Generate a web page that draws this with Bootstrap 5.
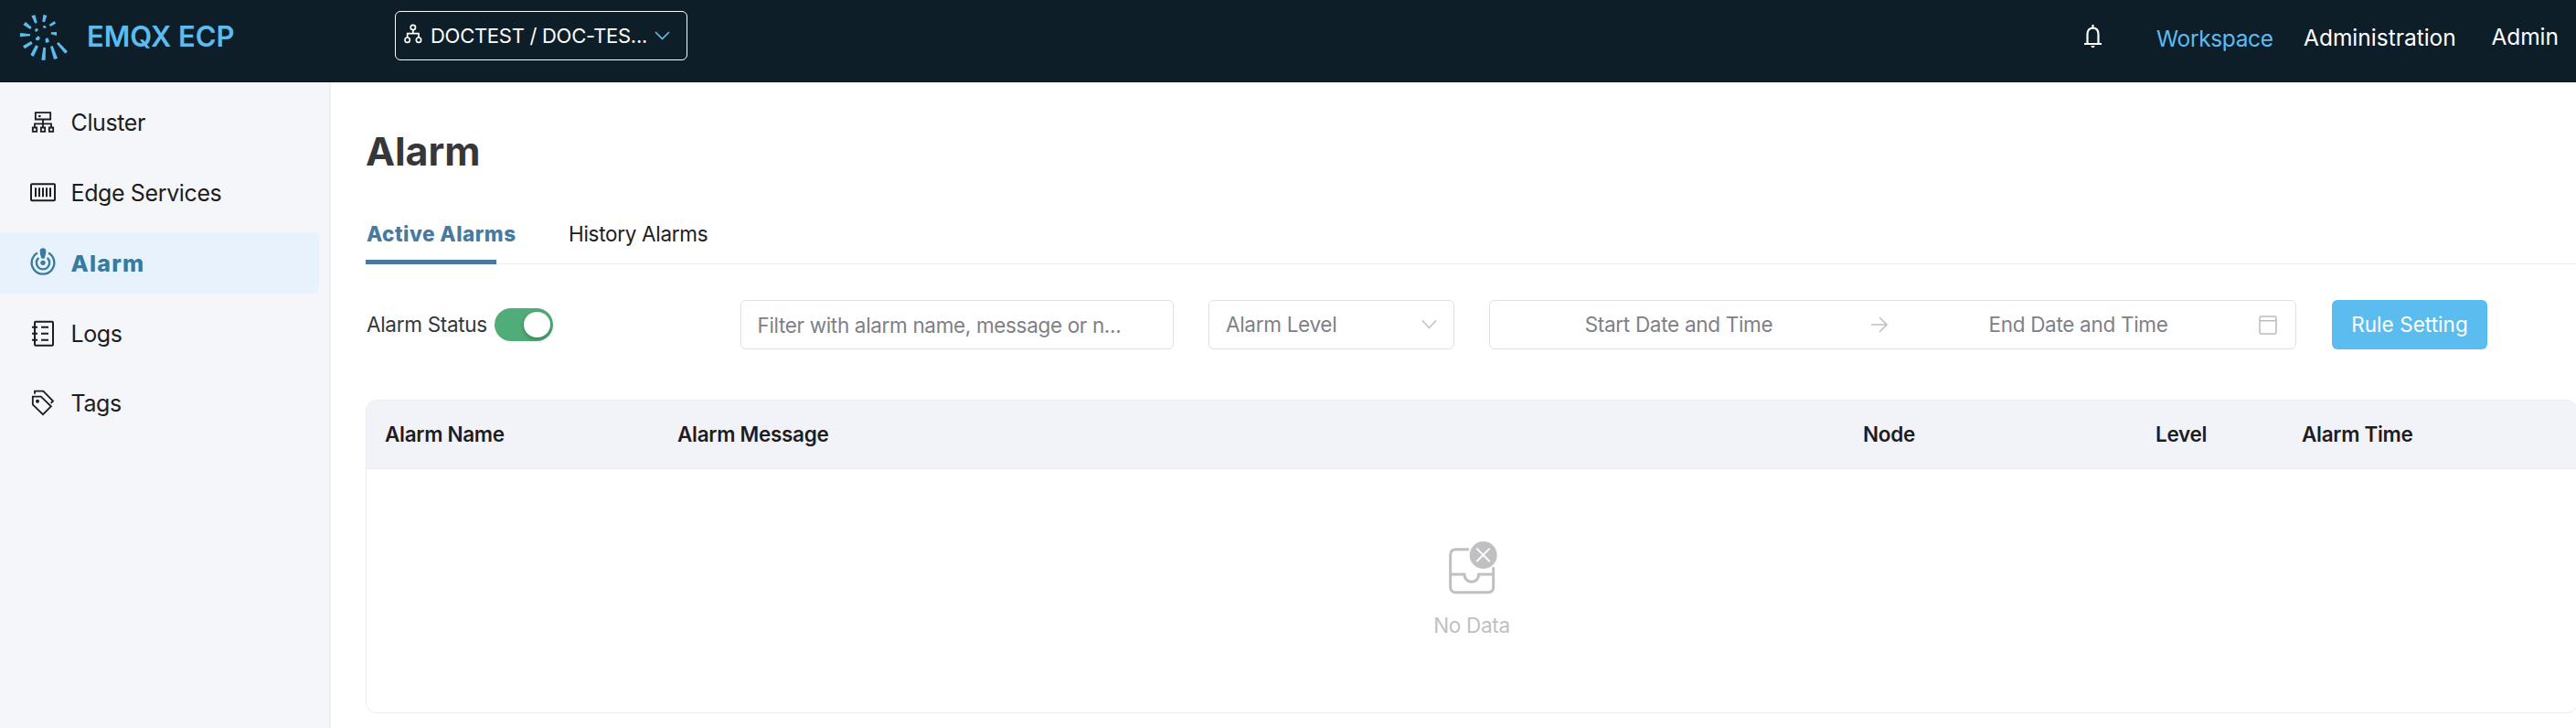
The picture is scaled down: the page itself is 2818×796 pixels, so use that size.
<!DOCTYPE html>
<html lang="en">
<head>
<meta charset="utf-8">
<title>Alarm - EMQX ECP</title>
<meta name="viewport" content="width=device-width, initial-scale=1">
<link href="https://cdn.jsdelivr.net/npm/bootstrap@5.3.0/dist/css/bootstrap.min.css" rel="stylesheet">
<style>
body{font-family:Inter,"Liberation Sans",sans-serif;font-size:22.5px;line-height:30px;letter-spacing:-.3px;color:#1d1d1f;background:#fff;overflow:hidden;white-space:nowrap}
svg{display:block;flex:none;overflow:visible}
a{text-decoration:none}
/* header */
.topbar{height:90px;padding:0 0 11px 22px;background:#0d1e29;border-bottom:1px solid #0b1024;color:#fff}
.brand-link{width:410px;padding-top:2px;font-size:31px;font-weight:600;letter-spacing:0;color:#5bbcef}
.brand-link svg{margin:2px 21px 0 0}
.ws-picker{width:320px;height:54px;padding:0 18px 0 9px;border:1px solid #fff;border-radius:6px;background:none;color:#fff;font-size:22px;letter-spacing:-.28px}
.ws-picker svg:first-child{margin:-4px 9px 0 0}
.top-bell{margin-right:60.5px}
.top-link{color:#fff;font-size:24.5px;letter-spacing:0}
.top-link.active{width:161px;padding-top:5px;color:#5bbcef;letter-spacing:-.35px}
.top-admin{width:205.5px;padding-top:4px}
.top-user{width:92.5px;padding-top:2px;letter-spacing:-.1px}
/* sidebar */
.side{width:362px;height:706px;padding-top:10.8px;background:#f5f6fa;border-right:2px solid #eeeff5}
.side-link{height:67px;width:349px;margin-bottom:9.8px;padding-left:32px;color:#1d1d1f;font-size:25px;letter-spacing:-.38px;border-radius:0 5px 5px 0}
.side-link.active{background:#e8f2fc;color:#377ba1;font-weight:800;letter-spacing:1.2px}
.side-link svg{margin-right:15.5px}
/* content */
.content{padding-left:38px}
.page-title{margin:50px 0 34px;font-size:43px;line-height:50px;font-weight:700;letter-spacing:-.1px;color:#36373b}
.alarm-tabs{height:65px;line-height:64px;border-bottom:1px solid #ececf0}
.alarm-tabs a{color:#1d1d1f}
.alarm-tabs .active{position:relative;width:222px;padding-left:1px;color:#467aa1;font-weight:800;letter-spacing:.5px}
.alarm-tabs .active::after{content:"";position:absolute;left:0;bottom:-1px;width:143px;height:5px;background:#467aa1}
.filters{height:54px;margin:39px 0 55px}
.status{width:410px;color:#36373b}
.status-label{width:141px;padding-left:1px}
.toggle-on{width:64px;height:36px;padding:4px 3px;border-radius:18px;background:#51ad78}
.toggle-on i{width:29px;height:28px;border-radius:50%;background:#fff;box-shadow:0 2px 5px rgba(0,35,11,.35)}
.field{height:54px;border:1px solid #dfdfe8;border-radius:6px;background:#fff;color:#808086}
.form-control.field{width:474px;margin-right:38px;padding:0 17.5px;font-size:22.5px;letter-spacing:-.34px}
.form-control.field::placeholder{color:#808086;opacity:1}
.level{width:269px;margin-right:38px;padding:0 18px}
.period{width:883px;margin-right:39px;padding:0 20px 0 0}
.period-start{width:416px;padding-right:3px}
.period-end{width:404px;padding-left:11px}
.rule-btn{width:170px;height:54px;padding:0;border:0;border-radius:6px;background:#5bbcef;color:#fff;font-size:22.5px;letter-spacing:.05px}
.alarm-card{width:2420px;height:343px;border:1px solid #ececf1;border-radius:12px;overflow:hidden}
.alarm-card table{table-layout:fixed;width:100%;margin:0;border-collapse:separate;border-spacing:0}
.alarm-card th{height:75px;padding:0 0 0 20px;vertical-align:middle;font-weight:600;color:#1d1d1f;background:#f2f3f9;border-bottom:1px solid #eaebf0}
.empty{padding-top:79px;color:#c0c0c2}
.empty svg{margin-left:3px}
.empty span{margin-top:19px}
</style>
</head>
<body>
<header class="topbar d-flex align-items-center">
  <a class="brand-link d-flex align-items-center" href="#">
    <svg width="52" height="50" viewBox="66 48 156 150" fill="#5bbcef"><path d="M142 48l12 3-7 22-8-2zM103 52l12-3 7 25-7 3zM76 81l8-9 20 17-5 7zM66 108v13l33-3v-6zM75 151l6 9 26-17-5-8zM100 180l10 6 16-34-9-4zM136 197h13l1-41-8-1zM177 195l12-4-16-41-8 3zM214 176l8-7-30-31-6 5zM186 105v12l-19-5 1-6zM179 69l4 8-17 10-5-6zM141 86l4-3 7 5-3 5-7-2zM114 98l6-6 6 5-5 7-6-1zM117 125l8-7 7 6-5 9-9-1zM149 127l8-3 5 13-10 4-3-4z"/></svg>
    <span>EMQX ECP</span>
  </a>
  <button class="ws-picker d-flex align-items-center" type="button">
    <svg width="20" height="20" viewBox="525 80 60 60" fill="none" stroke="#fff" stroke-width="5"><circle cx="554.500" cy="89" r="8"/><circle cx="536" cy="130" r="8"/><circle cx="573" cy="130" r="8"/><path d="M554.500 97v12M536 122v-13h37v13"/></svg>
    <span>DOCTEST / DOC-TES...</span>
    <svg class="ms-auto" width="17" height="10" viewBox="0 0 17 10" fill="none" stroke="#5bbcef" stroke-width="1.700"><path d="M1 1l7.500 7.500L16 1"/></svg>
  </button>
  <nav class="ms-auto d-flex align-items-center">
    <svg class="top-bell" width="19" height="25" viewBox="0 0 19 25" fill="none" stroke="#fff" stroke-width="2.200"><path d="M0 21h19M3.500 21V10.500C3.500 6 6 3.600 9.500 3.600S15.500 6 15.500 10.500V21M9.500 0v4"/><path d="M7.300 23h4.400l-1 2H8.300z" fill="#fff" stroke="none"/></svg>
    <a class="top-link active" href="#">Workspace</a>
    <a class="top-link top-admin" href="#">Administration</a>
    <a class="top-link top-user" href="#">Admin</a>
  </nav>
</header>
<div class="d-flex">
  <aside class="side flex-shrink-0">
    <a class="side-link d-flex align-items-center" href="#">
      <svg width="30" height="30" viewBox="96 358 90 90" fill="none" stroke="#1d1d1f" stroke-width="5.500"><path d="M116.500 370.500h49v22h-49zM141 393v26M114 419v-12h54v12M107.500 419.500h13v13h-13zM134.500 419.500h13v13h-13zM161.500 419.500h13v13h-13z"/><circle cx="130" cy="382" r="4" fill="#1d1d1f" stroke="none"/></svg>
      <span>Cluster</span></a>
    <a class="side-link d-flex align-items-center" href="#">
      <svg width="30" height="30" viewBox="96 587 90 90" fill="none" stroke="#1d1d1f" stroke-width="6"><rect x="102" y="603" width="78" height="54" rx="3"/><path d="M117 615v30M129 615v30M141 615v30M153 615v30M165 615v30"/></svg>
      <span>Edge Services</span></a>
    <a class="side-link active d-flex align-items-center" href="#">
      <svg width="30" height="30" viewBox="96 68 90 90" fill="none" stroke="#377ba1" stroke-width="7"><path d="M123 78.500a37 37 0 1 0 36 0"/><path d="M127 94.500a21.500 21.500 0 1 0 28 0"/><circle cx="141" cy="111" r="8" fill="#377ba1" stroke="none"/><path d="M131 72c0-12 20-12 20 0 0 9-2 15-4 22-2 4-10 4-12 0-2-7-4-13-4-22z" fill="#377ba1" stroke="none"/></svg>
      <span>Alarm</span></a>
    <a class="side-link d-flex align-items-center" href="#">
      <svg width="30" height="30" viewBox="96 298 90 90" fill="none" stroke="#1d1d1f" stroke-width="6"><rect x="114" y="303" width="60" height="78" rx="3"/><path d="M105 321h18M105 342h18M105 363h18M135 321h24M135 342h24M135 363h24"/></svg>
      <span>Logs</span></a>
    <a class="side-link d-flex align-items-center" href="#">
      <svg width="30" height="30" viewBox="96 529 90 90" fill="none" stroke="#1d1d1f" stroke-width="5.500"><path d="M107.500 552h27l33 32-26.500 26.500-33.500-32.500zM114 543v-9h28l32 32.500-7 7"/><circle cx="123" cy="567" r="6" fill="#1d1d1f" stroke="none"/></svg>
      <span>Tags</span></a>
  </aside>
  <main class="content">
    <h1 class="page-title">Alarm</h1>
    <nav class="alarm-tabs d-flex">
      <a class="active" href="#">Active Alarms</a>
      <a href="#">History Alarms</a>
    </nav>
    <div class="filters d-flex align-items-center">
      <div class="status d-flex align-items-center"><span class="status-label">Alarm Status</span><span class="toggle-on d-flex justify-content-end" role="switch" aria-checked="true"><i></i></span></div>
      <input class="form-control field" type="text" placeholder="Filter with alarm name, message or n...">
      <div class="field level d-flex align-items-center justify-content-between"><span>Alarm Level</span>
        <svg width="17" height="10" viewBox="0 0 17 10" fill="none" stroke="#c0c0c4" stroke-width="1.500"><path d="M1 .5l7.500 8L16 .5"/></svg></div>
      <div class="field period d-flex align-items-center">
        <span class="period-start flex-shrink-0 text-center">Start Date and Time</span>
        <svg width="20" height="18" viewBox="0 0 20 18" fill="none" stroke="#c0c0c4" stroke-width="1.600"><path d="M1 9h17M10 1l8 8-8 8"/></svg>
        <span class="period-end flex-shrink-0 text-center">End Date and Time</span>
        <svg class="ms-auto" width="20" height="21" viewBox="0 0 20 21" fill="none" stroke="#bcbcc0" stroke-width="1.500"><rect x="1" y="1" width="18" height="19" rx="1.500"/><path d="M1 5.700h18"/></svg>
      </div>
      <button class="btn rule-btn" type="button">Rule Setting</button>
    </div>
    <section class="alarm-card">
      <table class="table">
        <colgroup><col style="width:320px"><col style="width:1297px"><col style="width:320px"><col style="width:160px"><col></colgroup>
        <thead><tr><th>Alarm Name</th><th>Alarm Message</th><th>Node</th><th>Level</th><th>Alarm Time</th></tr></thead>
      </table>
      <div class="empty d-flex flex-column align-items-center">
        <svg width="53" height="58" viewBox="135 66 159 174" fill="none" stroke="#c0c0c2" stroke-width="9"><path d="M201 92h-43q-18 0-18 18v105q0 18 18 18h105q18 0 18-18v-65M140 174h46c0 33 47 33 47 0h48"/><circle cx="248" cy="111" r="45" fill="#c0c0c2" stroke="none"/><path d="M226 89l43 43M269 89l-43 43" stroke="#fff" stroke-width="5.500"/></svg>
        <span>No Data</span>
      </div>
    </section>
  </main>
</div>
<script src="https://cdn.jsdelivr.net/npm/bootstrap@5.3.0/dist/js/bootstrap.bundle.min.js"></script>
</body>
</html>
